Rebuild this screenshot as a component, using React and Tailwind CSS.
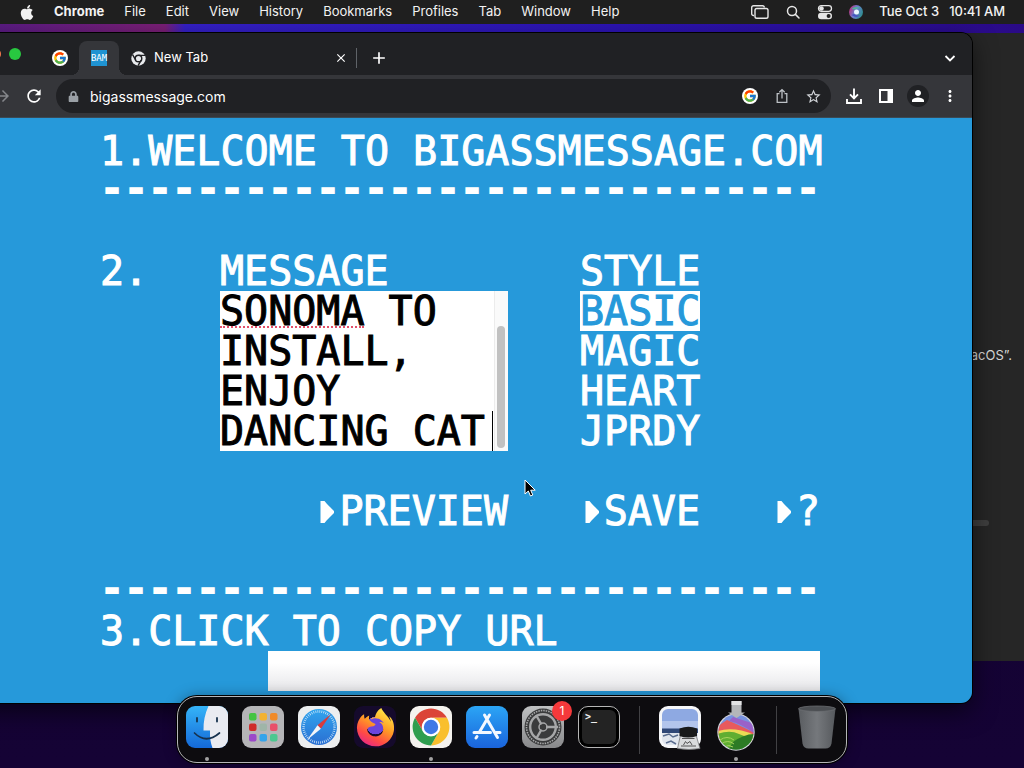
import React, { useState } from 'react';
import { FaApple, FaFirefoxBrowser, FaLock } from 'react-icons/fa';
import { FcGoogle } from 'react-icons/fc';
import { MdRefresh, MdPerson, MdMoreVert, MdStarBorder, MdArrowForward, MdAdd, MdClose } from 'react-icons/md';

const MENUS = ['File', 'Edit', 'View', 'History', 'Bookmarks', 'Profiles', 'Tab', 'Window', 'Help'];
const STYLES = ['BASIC', 'MAGIC', 'HEART', 'JPRDY'];
const DASHES = '-'.repeat(30);

function MenuBar() {
  return (
    <header className="relative z-10 flex h-6 shrink-0 items-center justify-between bg-[#1f1f1f] pl-5 pr-[19px] text-[13px] text-[#f2f2f2]">
      <nav aria-label="Menu bar" className="flex items-center gap-5">
        <button aria-label="Apple menu" className="flex w-[14px] justify-center">
          <FaApple size={17} />
        </button>
        <button className="font-bold">Chrome</button>
        {MENUS.map((m) => (
          <button key={m}>{m}</button>
        ))}
      </nav>
      <div className="flex items-center gap-4 font-medium">
        <button aria-label="Windows">
          <svg width="18" height="16" viewBox="0 0 18 16" fill="none" stroke="#e6e6e6" strokeWidth="1.4">
            <path d="M3 11.5H2.5a1.8 1.8 0 0 1-1.8-1.8V3.5A1.8 1.8 0 0 1 2.5 1.700h9a1.8 1.8 0 0 1 1.8 1.8" />
            <rect x="4" y="4.500" width="13" height="9.800" rx="1.800" />
          </svg>
        </button>
        <button aria-label="Search">
          <svg width="16" height="16" viewBox="0 0 16 16" fill="none" stroke="#e6e6e6" strokeWidth="1.500" strokeLinecap="round">
            <circle cx="7" cy="7" r="4.500" />
            <path d="M10.400 10.400 14 14" />
          </svg>
        </button>
        <button aria-label="Control Center">
          <svg width="16" height="16" viewBox="0 0 16 16">
            <rect x="1.500" y="1.700" width="13" height="5.600" rx="2.800" fill="none" stroke="#e6e6e6" strokeWidth="1.300" />
            <circle cx="4.500" cy="4.500" r="2.300" fill="#e6e6e6" />
            <rect x="1" y="8.800" width="14" height="6.400" rx="3.200" fill="#e6e6e6" />
            <circle cx="11.600" cy="12" r="2" fill="#1f1f1f" />
          </svg>
        </button>
        <button aria-label="Siri">
          <svg width="14" height="14" viewBox="0 0 14 14">
            <defs>
              <linearGradient id="siri" x1="0" y1="0.300" x2="1" y2="0.700">
                <stop offset="0" stopColor="#b8327a" />
                <stop offset="0.450" stopColor="#6b7fd0" />
                <stop offset="1" stopColor="#2a8f8a" />
              </linearGradient>
            </defs>
            <circle cx="7" cy="7" r="7" fill="url(#siri)" />
            <path d="M2.500 3.500Q6 1 10.500 2.500 8 4 5.500 4.500Z" fill="#4fb39b" />
            <path d="M2.500 10Q7 13.500 11 10.500 8 11 5 9Z" fill="#4454c0" />
            <circle cx="7.500" cy="7" r="2.500" fill="#e8f6ff" />
          </svg>
        </button>
        <time className="flex gap-[10px]">
          <span>Tue Oct 3</span>
          <span>10:41 AM</span>
        </time>
      </div>
    </header>
  );
}

function TabStrip() {
  return (
    <div className="flex h-[42px] items-end bg-[#202124] pl-[52px] pr-[14px] text-white">
      <div className="flex h-[34px] w-full items-center">
        <div className="-mt-2 flex gap-2">
          <button aria-label="Minimize" className="size-3 rounded-full bg-[#f5774a] -ml-[11px]" />
          <button aria-label="Zoom" className="size-3 rounded-full bg-[#28c840]" />
        </div>
        <button aria-label="Google tab" className="ml-[31px] flex size-4 items-center justify-center rounded-full bg-white">
          <FcGoogle size={14} />
        </button>
        <button
          aria-label="BigAssMessage tab"
          className="relative ml-[11px] flex h-full w-10 items-center justify-center rounded-t-lg bg-[#35363a] before:absolute before:-left-2 before:bottom-0 before:size-2 before:bg-[radial-gradient(circle_at_0_0,transparent_8px,#35363a_8px)] after:absolute after:-right-2 after:bottom-0 after:size-2 after:bg-[radial-gradient(circle_at_100%_0,transparent_8px,#35363a_8px)]"
        >
          <span className="flex size-4 items-center justify-center bg-[#1f93d2] font-['DejaVu_Sans_Mono'] text-[9px] leading-4">BAM</span>
        </button>
        <button className="flex w-[212px] items-center gap-2 pl-3 text-left text-[13px]">
          <svg width="15" height="15" viewBox="0 0 48 48">
            <circle cx="24" cy="24" r="23" fill="#e8eaed" />
            <g stroke="#202124" strokeWidth="4.500" fill="none">
              <path d="M24 14H45M15.300 29 5 11.500M32.700 29 22.500 47" />
              <circle cx="24" cy="24" r="10.500" />
            </g>
          </svg>
          New Tab
        </button>
        <button aria-label="Close tab" className="flex w-5 justify-center">
          <MdClose size={14} />
        </button>
        <span className="ml-[5px] h-5 w-px bg-[#5f6368]" />
        <button aria-label="New tab" className="ml-3">
          <MdAdd size={20} />
        </button>
        <button aria-label="Search tabs" className="ml-auto">
          <svg width="16" height="16" viewBox="0 0 16 16" fill="none" stroke="#fff" strokeWidth="1.800">
            <path d="m3.500 6 4.500 4.500L12.500 6" />
          </svg>
        </button>
      </div>
    </div>
  );
}

function Toolbar() {
  return (
    <div className="flex h-[43px] items-center border-b border-[#3a4a56] bg-[#35363a] pl-[46px] pr-[13px] text-white">
      <button aria-label="Forward" className="text-[#85878b]">
        <MdArrowForward size={18} />
      </button>
      <button aria-label="Reload" className="ml-3">
        <MdRefresh size={20} />
      </button>
      <div className="ml-3 flex h-[34px] min-w-0 flex-1 items-center rounded-full bg-[#202124] pl-3 pr-[9px]">
        <FaLock size={11} className="text-[#9aa0a6]" />
        <input
          aria-label="Address"
          defaultValue="bigassmessage.com"
          className="ml-[11px] min-w-0 flex-1 bg-transparent text-[14px] outline-none"
        />
        <button aria-label="Google Lens" className="flex size-4 items-center justify-center rounded-full bg-white">
          <FcGoogle size={14} />
        </button>
        <button aria-label="Share" className="ml-4">
          <svg width="16" height="16" viewBox="0 0 16 16" fill="none" stroke="#bdc1c6" strokeWidth="1.300">
            <path d="M5.500 5.700H3.200v8.600h9.600V5.700h-2.300M8 10.500V1.800M5.300 4.300 8 1.600l2.700 2.700" />
          </svg>
        </button>
        <button aria-label="Bookmark this tab" className="ml-[15px] text-[#d0d3d7]">
          <MdStarBorder size={17} />
        </button>
      </div>
      <button aria-label="Downloads" className="ml-[14px]">
        <svg width="18" height="18" viewBox="0 0 18 18" fill="none" stroke="#fff" strokeWidth="1.900">
          <path d="M9 1.500V11M5 7.300l4 4 4-4M2 12v4h14v-4" />
        </svg>
      </button>
      <button aria-label="Side panel" className="ml-4">
        <svg width="14" height="14" viewBox="0 0 14 14">
          <path fill="#fff" fillRule="evenodd" d="M0 0h14v14H0ZM2 2v10h6.500V2Z" />
        </svg>
      </button>
      <button aria-label="Profile" className="ml-[14px] flex size-[22px] items-center justify-center rounded-full bg-[#202124]">
        <MdPerson size={18} />
      </button>
      <button aria-label="More" className="ml-3">
        <MdMoreVert size={18} />
      </button>
    </div>
  );
}

function DashedRule({ className = '' }) {
  return (
    <p className={`whitespace-nowrap font-['Liberation_Mono',monospace] font-bold [-webkit-text-stroke:2px_currentColor] ${className}`}>
      {DASHES}
    </p>
  );
}

function ArrowButton({ children }) {
  return (
    <button className="flex items-center gap-1 justify-self-end">
      <svg width="16" height="26" viewBox="0 0 16 26" fill="#fff">
        <path d="M1.500 3h4L8 6l3 3 4 4v2l-4 4-3 3-2.500 3h-4Z" />
      </svg>
      {children}
    </button>
  );
}

function Page() {
  const [message, setMessage] = useState('SONOMA TO\nINSTALL,\nENJOY\nDANCING CAT');
  const [style, setStyle] = useState('BASIC');
  return (
    <main className="bg-[#2699da] pb-3 pt-[13px] font-['DejaVu_Sans_Mono',monospace] text-[40px] leading-10 text-white [-webkit-text-stroke:1px_currentColor]">
      <div className="mx-auto w-[720px]">
        <h1 className="whitespace-nowrap">1.WELCOME TO BIGASSMESSAGE.COM</h1>
        <DashedRule className="mb-10" />
        <section className="grid grid-cols-[120px_288px_120px] items-start">
          <span>2.</span>
          <div>
            <label htmlFor="message" className="block">MESSAGE</label>
            <div className="relative bg-white text-black">
              <textarea
                id="message"
                rows={4}
                spellCheck={false}
                value={message}
                onChange={(e) => setMessage(e.target.value)}
                className="block w-full resize-none overflow-hidden pr-4 outline-none"
              />
              <span className="absolute left-0 top-[35px] w-36 border-b-2 border-dotted border-[#e2506a]" />
              <span className="absolute bottom-0 right-[15px] h-10 w-px bg-black" />
              <span className="absolute inset-y-0 right-0 w-[14px] border-l border-[#ececec] bg-[#fafafa]" />
              <span className="absolute bottom-[3px] right-[3px] h-[122px] w-2 rounded-full bg-[#c1c1c1]" />
            </div>
          </div>
          <div className="ml-[72px] flex w-[120px] flex-col items-start">
            <span>STYLE</span>
            {STYLES.map((s) => (
              <button
                key={s}
                aria-pressed={s === style}
                onClick={() => setStyle(s)}
                className={s === style ? 'w-[120px] bg-white text-left text-[#2699da]' : 'text-left'}
              >
                {s}
              </button>
            ))}
          </div>
        </section>
        <div className="my-10 grid grid-cols-[408px_192px_120px]">
          <ArrowButton>PREVIEW</ArrowButton>
          <ArrowButton>SAVE</ArrowButton>
          <ArrowButton>?</ArrowButton>
        </div>
        <DashedRule />
        <label htmlFor="url" className="block">3.CLICK TO COPY URL</label>
        <input id="url" readOnly className="ml-auto block h-10 w-[552px] bg-white bg-linear-to-b from-white from-30% to-[#e6e6e9] outline-none" />
      </div>
    </main>
  );
}

function ChromeLogo() {
  return (
    <svg viewBox="0 0 42 42" className="size-full">
      <rect width="42" height="42" rx="9" fill="#f4f2ee" />
      <g transform="translate(-1.080 -1.080) scale(.92)">
        <path fill="#db4437" d="M6.680 14A20 20 0 0 1 41.320 14H24A10 10 0 0 0 15.340 29Z" />
        <path fill="#f9bf2d" d="M41.320 14A20 20 0 0 1 24 44L32.660 29A10 10 0 0 0 24 14Z" />
        <path fill="#2f9e4f" d="M24 44A20 20 0 0 1 6.680 14L15.340 29A10 10 0 0 0 32.660 29Z" />
        <circle cx="24" cy="24" r="10" fill="#fff" />
        <circle cx="24" cy="24" r="7.800" fill="#3e78e6" />
      </g>
    </svg>
  );
}

function FinderLogo() {
  return (
    <svg viewBox="0 0 42 42" className="size-full">
      <defs>
        <linearGradient id="finder" x1="0" y1="0" x2="0" y2="1">
          <stop offset="0" stopColor="#35b4f8" />
          <stop offset="1" stopColor="#1469d8" />
        </linearGradient>
        <clipPath id="tile"><rect width="42" height="42" rx="9" /></clipPath>
      </defs>
      <g clipPath="url(#tile)">
        <path fill="url(#finder)" d="M0 0h42v42H0Z" />
        <path fill="#e9ebf1" d="M22.500 0Q17 12 17.500 24.500h6.500Q23.500 34 26.500 42H42V0Z" />
      </g>
      <path d="M11 12v3.500M31 12v3.500" stroke="#17324e" strokeWidth="1.800" strokeLinecap="round" />
      <path d="M8.500 27Q20 38.500 33.500 27" stroke="#17324e" strokeWidth="1.700" strokeLinecap="round" fill="none" />
    </svg>
  );
}

function LaunchpadLogo() {
  const colors = ['#43c443', '#f2b232', '#f08a28', '#cf2b2b', '#9fb5a8', '#e8506a', '#9b49c9', '#35a4ea', '#4cc790'];
  return (
    <svg viewBox="0 0 42 42" className="size-full">
      <rect width="42" height="42" rx="9" fill="#b5b5b7" />
      {colors.map((c, i) => (
        <rect key={c} x={7 + (i % 3) * 10.500} y={7 + Math.floor(i / 3) * 10.500} width="7.500" height="7.500" rx="2" fill={c} />
      ))}
    </svg>
  );
}

function SafariLogo() {
  return (
    <svg viewBox="0 0 42 42" className="size-full">
      <defs>
        <linearGradient id="safari" x1="0" y1="0" x2="0" y2="1">
          <stop offset="0" stopColor="#31a5ee" />
          <stop offset="1" stopColor="#2a6fd2" />
        </linearGradient>
      </defs>
      <rect width="42" height="42" rx="9" fill="#eceeef" />
      <circle cx="21" cy="21" r="18" fill="url(#safari)" />
      <circle cx="21" cy="21" r="15.500" fill="none" stroke="#d8ecfa" strokeWidth="2.400" strokeDasharray="0.700 1.330" />
      <path fill="#d93b3b" d="m33 8-13.500 11.200 3.400 3.500Z" />
      <path fill="#f3f5f8" d="m9 34 10.500-14.800 3.400 3.500Z" />
    </svg>
  );
}

function FirefoxLogo() {
  return (
    <span className="flex size-full items-center justify-center rounded-[9px] bg-[#150a2c]">
      <svg width="0" height="0" className="absolute">
        <defs>
          <linearGradient id="flame" x1="0.800" y1="0" x2="0.250" y2="1">
            <stop offset="0" stopColor="#fff04a" />
            <stop offset="0.450" stopColor="#ff9a25" />
            <stop offset="0.750" stopColor="#ff4b45" />
            <stop offset="1" stopColor="#e5268a" />
          </linearGradient>
        </defs>
      </svg>
      <span className="rounded-full bg-[radial-gradient(circle_at_50%_45%,#6b45dc_0_30%,transparent_31%)]">
        <FaFirefoxBrowser size={39} style={{ fill: 'url(#flame)' }} />
      </span>
    </span>
  );
}

function AppStoreLogo() {
  return (
    <svg viewBox="0 0 42 42" className="size-full">
      <defs>
        <linearGradient id="store" x1="0" y1="0" x2="0" y2="1">
          <stop offset="0" stopColor="#2ba5f5" />
          <stop offset="1" stopColor="#1a64dc" />
        </linearGradient>
      </defs>
      <rect width="42" height="42" rx="9" fill="url(#store)" />
      <g stroke="#f4f8ff" strokeWidth="3" strokeLinecap="round">
        <path d="M23.500 9 13.500 26M18.500 9 31.500 31.500M8 26.500h16.500M30 26.500h4M11 30.500l-1 1.500" />
      </g>
    </svg>
  );
}

function SettingsLogo() {
  return (
    <svg viewBox="0 0 42 42" className="size-full">
      <defs>
        <linearGradient id="metal" x1="0" y1="0" x2="0" y2="1">
          <stop offset="0" stopColor="#bfc1c2" />
          <stop offset="1" stopColor="#88898b" />
        </linearGradient>
      </defs>
      <rect width="42" height="42" rx="9" fill="url(#metal)" />
      <circle cx="21" cy="21" r="18.500" fill="#3a3b3c" />
      <g fill="none" stroke="#a6a7a8">
        <circle cx="21" cy="21" r="16.500" strokeWidth="1.600" strokeDasharray="1.500 1" />
        <circle cx="21" cy="21" r="12.800" strokeWidth="2.400" />
        <circle cx="21" cy="21" r="4" strokeWidth="1.500" />
        <path strokeWidth="2.400" d="M24 21h12M19.500 18.500 14 9M19.500 23.500 14 33" />
      </g>
      <circle cx="21" cy="21" r="2.500" fill="#3a3b3c" />
    </svg>
  );
}

function TerminalLogo() {
  return (
    <span className="block size-full rounded-[10px] border border-[#b6b6b6] bg-black p-[3px] text-left">
      <span className="block size-full rounded-md bg-[#232323] pl-[3px] font-['DejaVu_Sans_Mono',monospace] text-[10px] font-bold leading-[14px] text-[#eee]">&gt;_</span>
    </span>
  );
}

function PreviewLogo() {
  return (
    <svg viewBox="0 0 42 42" className="size-full overflow-visible">
      <rect width="42" height="42" rx="9" fill="#f5f6f8" />
      <path fill="#8ea9e2" d="M3 9a6 6 0 0 1 6-6h24a6 6 0 0 1 6 6v14H3Z" />
      <path fill="#b3c5ec" d="M3 15h36v8H3Z" />
      <path fill="#2f4776" d="M3 22.500h36v5H3Z" />
      <path fill="#e0e5ed" d="M3 27h36v6a6 6 0 0 1-6 6H9a6 6 0 0 1-6-6Z" />
      <path d="m4 30 6-2 4 3 5-2M7 37l5-2 5 3" stroke="#586b8d" strokeWidth="1.500" fill="none" />
      <path fill="#d9dbdd" stroke="#77797b" strokeWidth="0.800" d="M21.500 29h15.500l4 13.500q-11 2-22.500 0Z" />
      <path fill="#18191a" d="M20.500 22.500q9-3.500 17.500 0V30q-9 3-17.500 0Z" />
      <path d="M23 32.500h12.500M24.500 39l2-3.500 1.500 2 3-2 2 3.500M22 40h15" stroke="#555" strokeWidth="1" fill="none" />
    </svg>
  );
}

function InstallerLogo() {
  return (
    <svg viewBox="0 0 42 42" className="size-full overflow-visible">
      <defs>
        <clipPath id="orb"><circle cx="21" cy="26" r="17.500" /></clipPath>
      </defs>
      <circle cx="21" cy="26" r="18.700" fill="#d5d7dc" />
      <g clipPath="url(#orb)">
        <path fill="#7892e0" d="M0 4h42v42H0Z" />
        <path fill="#e85a5d" d="M0 22 12 14q12 5 30 14v8H0Z" />
        <path fill="#9a62c8" d="m18 11 22 7v10Q28 18 14 15Z" />
        <path fill="#e9dc55" d="M0 26q18-7 42 4v6H0Z" />
        <path fill="#5fae31" d="M0 29q14-6 24-1t18-1v20H0Z" />
        <path fill="#2c7b25" d="M18 36q12-9 24-8v18H12Z" />
        <path d="M5 34q7-5 14 0M6 38q7-5 13 0M9 41q5-3 9 0" stroke="#a7d35e" fill="none" />
      </g>
      <path fill="#b4b6b9" d="M16.500-5h10V6.500H30L21.500 12 13 6.500h3.500Z" />
      <path fill="#e2e3e4" d="M16.500-5h10v4h-10Z" />
    </svg>
  );
}

function TrashLogo() {
  return (
    <svg viewBox="0 -2 42 46" className="size-full overflow-visible" preserveAspectRatio="none">
      <defs>
        <linearGradient id="bin" x1="0" y1="0" x2="1" y2="0">
          <stop offset="0" stopColor="#5a5d61" />
          <stop offset="0.500" stopColor="#75787c" />
          <stop offset="1" stopColor="#56595d" />
        </linearGradient>
      </defs>
      <path fill="url(#bin)" d="M2.500 1 6.500 39q1 5.500 6 5.500h17q5 0 6-5.500L39.500 1Z" />
      <ellipse cx="21" cy="1" rx="18.500" ry="3" fill="#4c4f53" stroke="#6d7074" strokeWidth="0.800" />
    </svg>
  );
}

const APPS = [
  { name: 'Finder', Logo: FinderLogo, running: true },
  { name: 'Launchpad', Logo: LaunchpadLogo },
  { name: 'Safari', Logo: SafariLogo },
  { name: 'Firefox', Logo: FirefoxLogo },
  { name: 'Chrome', Logo: ChromeLogo, running: true },
  { name: 'App Store', Logo: AppStoreLogo },
  { name: 'Settings', Logo: SettingsLogo, badge: '1' },
  { name: 'Terminal', Logo: TerminalLogo },
  { name: 'Preview', Logo: PreviewLogo, divider: true },
  { name: 'Installer', Logo: InstallerLogo, running: true },
  { name: 'Trash', Logo: TrashLogo, divider: true },
];

function Dock() {
  return (
    <div className="absolute inset-x-0 bottom-[5px] flex justify-center">
      <nav aria-label="Dock" className="flex h-[67px] items-start gap-[14px] rounded-[20px] border border-[#b5b5b8] bg-[#0d0c0f] px-2 pt-[9px] shadow-[0_0_0_1px_#000,0_0_14px_rgba(0,0,0,0.35)]">
        {APPS.map(({ name, Logo, running, badge, divider }) => (
          <React.Fragment key={name}>
            {divider && <span className="mx-[5px] h-12 w-px bg-[#414144]" />}
            <button aria-label={name} className="relative size-[42px]">
              <Logo />
              {badge && (
                <span className="absolute -right-2 -top-[5px] flex size-5 items-center justify-center rounded-full bg-[#f5393b] text-[12px] text-white">{badge}</span>
              )}
              {running && <span className="absolute -bottom-[13px] left-[19px] size-1 rounded-full bg-[#a2a2a2]" />}
            </button>
          </React.Fragment>
        ))}
      </nav>
    </div>
  );
}

export default function App() {
  return (
    <div className="relative flex min-h-screen flex-col overflow-hidden bg-[#12022f] font-['Inter',sans-serif]">
      <MenuBar />
      <div className="relative flex-1 bg-linear-to-b from-transparent to-[#150335]">
        <div className="h-[9px] bg-[linear-gradient(90deg,#5c1c84_0,#7a1f76_165px,#3420c8_185px,#2c14b4_60%,#2a0a86)]" />
        <div className="absolute right-0 top-[9px] h-[628px] w-40 bg-[#262626] text-right text-[13px] text-[#d6d6d6]">
          <p className="pr-3 pt-[312px] leading-5">“macOS”.</p>
          <div className="mr-[35px] mt-[155px] h-[6px] rounded-full bg-[#3f3f3f]" />
        </div>
        <div className="relative -ml-[52px] mr-[52px] overflow-hidden rounded-[11px] shadow-[0_0_0_1px_#000,0_8px_24px_rgba(0,0,0,0.6)]">
          <TabStrip />
          <Toolbar />
          <Page />
        </div>
        <svg className="absolute left-[524px] top-[455px]" width="13" height="19" viewBox="0 0 13 19">
          <path d="M1 1v14l3.300-3 2.200 5 2.300-1-2.100-4.800h4.500Z" fill="#000" stroke="#fff" strokeWidth="1" />
        </svg>
      </div>
      <Dock />
    </div>
  );
}
